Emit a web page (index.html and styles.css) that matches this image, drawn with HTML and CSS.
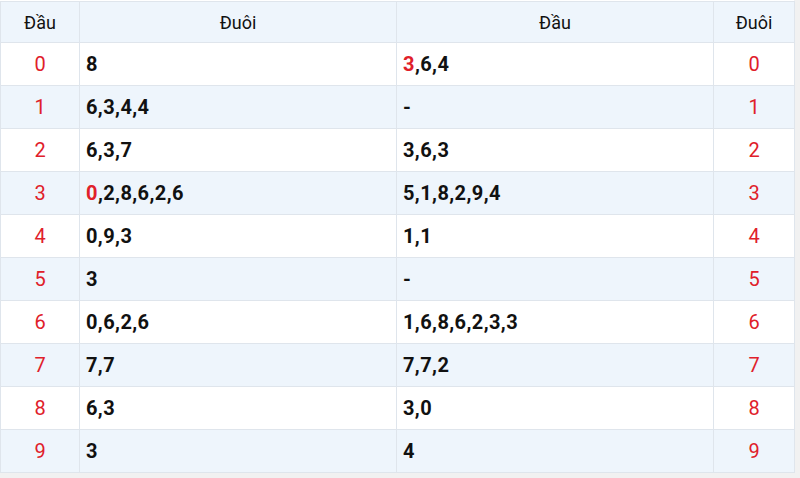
FILE: index.html
```html
<!DOCTYPE html>
<html>
<head>
<meta charset="utf-8">
<link rel="stylesheet" href="styles.css">
</head>
<body>
<div class="wrap">
<table class="loto">
<colgroup><col class="c1"><col class="c2"><col class="c3"><col class="c4"></colgroup>
<thead>
<tr><th>Đầu</th><th>Đuôi</th><th>Đầu</th><th>Đuôi</th></tr>
</thead>
<tbody>
<tr><td class="num">0</td><td class="val">8</td><td class="val"><span class="hl">3</span>,6,4</td><td class="num">0</td></tr>
<tr><td class="num">1</td><td class="val">6,3,4,4</td><td class="val">-</td><td class="num">1</td></tr>
<tr><td class="num">2</td><td class="val">6,3,7</td><td class="val">3,6,3</td><td class="num">2</td></tr>
<tr><td class="num">3</td><td class="val"><span class="hl">0</span>,2,8,6,2,6</td><td class="val">5,1,8,2,9,4</td><td class="num">3</td></tr>
<tr><td class="num">4</td><td class="val">0,9,3</td><td class="val">1,1</td><td class="num">4</td></tr>
<tr><td class="num">5</td><td class="val">3</td><td class="val">-</td><td class="num">5</td></tr>
<tr><td class="num">6</td><td class="val">0,6,2,6</td><td class="val">1,6,8,6,2,3,3</td><td class="num">6</td></tr>
<tr><td class="num">7</td><td class="val">7,7</td><td class="val">7,7,2</td><td class="num">7</td></tr>
<tr><td class="num">8</td><td class="val">6,3</td><td class="val">3,0</td><td class="num">8</td></tr>
<tr><td class="num">9</td><td class="val">3</td><td class="val">4</td><td class="num">9</td></tr>
</tbody>
</table>
</div>
</body>
</html>
```
FILE: styles.css
```css
html, body {
  margin: 0;
  padding: 0;
  background: #f1f1f1;
}
body {
  font-family: Roboto, "Liberation Sans", Arial, sans-serif;
}
.wrap {
  width: 794px;
  padding: 1px 0 0 0;
  background: #fff;
}
.loto {
  width: 794px;
  border-collapse: collapse;
  table-layout: fixed;
  background: #fff;
}
.c1 { width: 79px; }
.c2 { width: 317px; }
.c3 { width: 317px; }
.c4 { width: 81px; }
.loto th, .loto td {
  border: 1px solid #dfe5ec;
  padding: 0 6px;
}
.loto th {
  height: 40px;
  font-weight: 400;
  font-size: 18px;
  color: #111;
  background: #eef5fc;
  text-align: center;
}
.loto td {
  height: 42px;
  font-size: 20px;
}
.loto tbody tr:nth-child(even) td {
  background: #eef5fc;
}
.num {
  text-align: center;
  color: #e0202a;
}
.val {
  font-weight: 700;
  color: #111;
  letter-spacing: 0.4px;
}
.hl {
  color: #e0202a;
}
```
